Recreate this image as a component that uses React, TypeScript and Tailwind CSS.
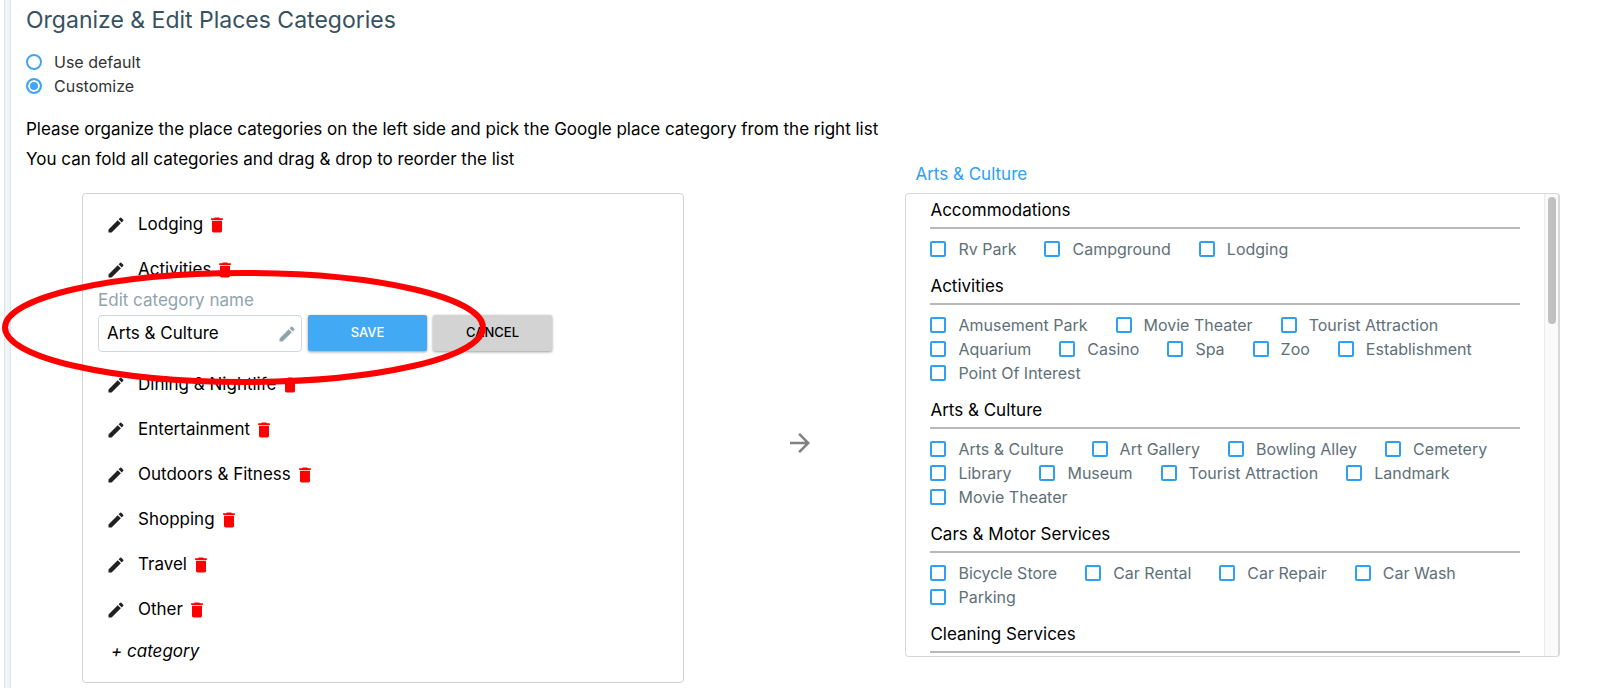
import * as React from 'react';
import { useState } from 'react';
import { MdArrowForward, MdDelete, MdEdit } from 'react-icons/md';

type Section = { title: string; items: string[] };

const CATEGORIES = [
  'Lodging',
  'Activities',
  'Arts & Culture',
  'Dining & Nightlife',
  'Entertainment',
  'Outdoors & Fitness',
  'Shopping',
  'Travel',
  'Other',
];

const GOOGLE_PLACES: Section[] = [
  { title: 'Accommodations', items: ['Rv Park', 'Campground', 'Lodging'] },
  {
    title: 'Activities',
    items: [
      'Amusement Park',
      'Movie Theater',
      'Tourist Attraction',
      'Aquarium',
      'Casino',
      'Spa',
      'Zoo',
      'Establishment',
      'Point Of Interest',
    ],
  },
  {
    title: 'Arts & Culture',
    items: [
      'Arts & Culture',
      'Art Gallery',
      'Bowling Alley',
      'Cemetery',
      'Library',
      'Museum',
      'Tourist Attraction',
      'Landmark',
      'Movie Theater',
    ],
  },
  {
    title: 'Cars & Motor Services',
    items: ['Bicycle Store', 'Car Rental', 'Car Repair', 'Car Wash', 'Parking'],
  },
  { title: 'Cleaning Services', items: [] },
];

type ModeOptionProps = {
  label: string;
  checked: boolean;
  onSelect: () => void;
};

function ModeOption({ label, checked, onSelect }: ModeOptionProps) {
  return (
    <label className="flex h-6 w-fit items-center gap-3 text-base text-[#333]">
      <input
        type="radio"
        name="mode"
        checked={checked}
        onChange={onSelect}
        className="size-4 appearance-none rounded-full border-2 border-[#42a5f5] bg-white checked:bg-[#42a5f5] checked:shadow-[inset_0_0_0_2px_white]"
      />
      {label}
    </label>
  );
}

function CategoryRow({ name, onEdit }: { name: string; onEdit: () => void }) {
  return (
    <li className="flex h-[45px] items-center pl-[23px]">
      <button type="button" aria-label={`Edit ${name}`} onClick={onEdit}>
        <MdEdit className="size-5 text-[#212121]" />
      </button>
      <span className="ml-3">{name}</span>
      <button type="button" aria-label={`Delete ${name}`} className="ml-1">
        <MdDelete className="size-5 text-[#ff0000]" />
      </button>
    </li>
  );
}

type EditorProps = {
  value: string;
  onChange: (value: string) => void;
};

function CategoryEditor({ value, onChange }: EditorProps) {
  return (
    <li className="relative mb-2.5 px-[15px]">
      <label htmlFor="category-name" className="block leading-4 text-[#90a4ae]">
        Edit category name
      </label>
      <div className="mt-[7px] flex gap-1.5">
        <div className="flex h-[37px] w-[204px] items-center rounded border border-[#cfd8dc] pr-1 pl-2">
          <input
            id="category-name"
            value={value}
            onChange={(e) => onChange(e.target.value)}
            className="w-full min-w-0 bg-transparent text-black outline-none"
          />
          <MdEdit className="size-5 shrink-0 text-[#90a4ae]" />
        </div>
        <button
          type="button"
          className="h-9 w-[119px] rounded-xs bg-[#42a9f5] text-[13px] font-medium text-white shadow-[0_1px_3px_rgba(0,0,0,0.4)]"
        >
          SAVE
        </button>
        <button
          type="button"
          className="h-9 w-[119px] rounded-xs bg-[#d3d3d3] text-[13px] font-medium text-black shadow-[0_1px_3px_rgba(0,0,0,0.4)]"
        >
          CANCEL
        </button>
      </div>
      {/* hand drawn highlight around the editor */}
      <svg
        viewBox="0 0 484 115"
        className="pointer-events-none absolute -top-[22px] -left-[81px] h-[115px] w-[484px] max-w-none"
        fill="none"
        aria-hidden="true"
      >
        <ellipse cx="242" cy="57.5" rx="239" ry="54.5" stroke="#ff0000" strokeWidth="6" />
      </svg>
    </li>
  );
}

function PlaceSection({ title, items }: Section) {
  return (
    <section className="mb-[13px]">
      <h3 className="border-b-2 border-[#b8b8b8] pb-[5px] leading-6">{title}</h3>
      <div className="mt-2 flex flex-wrap gap-x-7">
        {items.map((item) => (
          <label key={item} className="flex h-6 items-center gap-3 text-base text-[#607078]">
            <input
              type="checkbox"
              className="size-4 appearance-none rounded-[2px] border-2 border-[#2ba0f5] bg-white checked:bg-[#2ba0f5]"
            />
            {item}
          </label>
        ))}
      </div>
    </section>
  );
}

export default function App() {
  const [mode, setMode] = useState<'default' | 'custom'>('custom');
  const [editing, setEditing] = useState('Arts & Culture');
  const [draft, setDraft] = useState('Arts & Culture');

  const startEdit = (name: string) => {
    setEditing(name);
    setDraft(name);
  };

  return (
    <div className="flex min-h-screen bg-white pl-1 font-['Inter',sans-serif] text-[17px] text-black">
      <div className="w-[7px] shrink-0 border-x border-[#dbe4ea] bg-[#eff4f8]" />
      <main className="min-w-0 flex-1 pr-10 pl-[15px]">
        <h1 className="pt-1 text-[23px] leading-8 text-[#37515f]">
          Organize &amp; Edit Places Categories
        </h1>
        <div className="mt-[14px]">
          <ModeOption
            label="Use default"
            checked={mode === 'default'}
            onSelect={() => setMode('default')}
          />
          <ModeOption
            label="Customize"
            checked={mode === 'custom'}
            onSelect={() => setMode('custom')}
          />
        </div>

        <div className="mt-4 flex items-start">
          <div className="min-w-0 flex-[880]">
            <p className="leading-[30px]">
              Please organize the place categories on the left side and pick the Google place
              category from the right list
            </p>
            <p className="leading-[30px]">
              You can fold all categories and drag &amp; drop to reorder the list
            </p>
            <div className="mt-[19px] flex pl-[56px]">
              <ul className="min-w-0 flex-[603] rounded border border-[#d3d3d3] pt-2 pb-[10px]">
                {CATEGORIES.map((name) =>
                  name === editing ? (
                    <CategoryEditor key={name} value={draft} onChange={setDraft} />
                  ) : (
                    <CategoryRow key={name} name={name} onEdit={() => startEdit(name)} />
                  )
                )}
                <li className="flex h-10 items-center pl-7">
                  <button type="button" className="italic">
                    + category
                  </button>
                </li>
              </ul>
              <div className="flex flex-[222] items-center justify-center">
                <MdArrowForward className="mt-2.5 ml-2.5 size-[30px] text-[#808080]" />
              </div>
            </div>
          </div>

          <div className="min-w-0 flex-[655] pt-12">
            <h2 className="pl-[10px] leading-6 text-[#2ba0f5]">{editing}</h2>
            <div className="mt-[7px] flex h-[464px] overflow-hidden rounded border border-r-2 border-[#d8d8d8]">
              <div className="min-w-0 flex-1 px-6 pt-1">
                {GOOGLE_PLACES.map((section) => (
                  <PlaceSection key={section.title} {...section} />
                ))}
              </div>
              <div className="w-[14px] shrink-0 border-l border-[#ebebeb] bg-[#fafafa] pt-[3px] pr-[2px] pl-[3px]">
                <div className="h-[127px] rounded-full bg-[#c1c1c1]" />
              </div>
            </div>
          </div>
        </div>
      </main>
    </div>
  );
}
